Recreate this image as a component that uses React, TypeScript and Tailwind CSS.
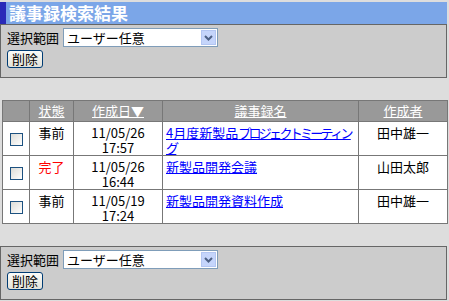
import React from 'react';

const rows = [
  { status: '事前', done: false, date: '11/05/26', time: '17:57', title: ['4月度新製品', 'プロジェクトミーティング'], author: '田中雄一' },
  { status: '完了', done: true, date: '11/05/26', time: '16:44', title: ['新製品開発会議', ''], author: '山田太郎' },
  { status: '事前', done: false, date: '11/05/19', time: '17:24', title: ['新製品開発資料作成', ''], author: '田中雄一' },
];

const FilterPanel: React.FC = () => (
  <div className="h-[54px] bg-[#cccccc] border border-[#666666] pt-[3px] pl-[6px]">
    <div className="flex items-center h-[19px]">
      <span className="w-[56px] leading-[19px] text-black">選択範囲</span>
      <div className="w-[155px] h-[19px] bg-white border border-[#7f9db9] flex items-center justify-between pl-[3px] pr-[1px]">
        <span className="leading-[17px] text-black">ユーザー任意</span>
        <span className="w-[15px] h-[15px] bg-[#c5d5fb] border border-[#b3c6f2] flex items-center justify-center">
          <svg width="9" height="6" viewBox="0 0 9 6">
            <path d="M1 1 L4.5 4.5 L8 1" stroke="#4d6185" strokeWidth="2" fill="none" />
          </svg>
        </span>
      </div>
    </div>
    <button className="mt-[3px] w-[36px] h-[18px] rounded-[3px] border border-[#003c74] bg-linear-to-b from-[#fbfbf8] to-[#e3e2da] text-black leading-[16px] p-0">
      削除
    </button>
  </div>
);

const App: React.FC = () => {
  return (
    <div className="w-[449px] h-[301px] bg-[#dddddd] pt-[2px] font-['Noto_Sans_CJK_JP',sans-serif] text-[13px] overflow-hidden">
      <div className="w-[447px]">
        <div className="h-[22px] bg-[#7ba6e8] border-l-[6px] border-[#2a2ab8] pl-[3px] text-white font-bold text-[17px] leading-[22px]">
          議事録検索結果
        </div>
        <FilterPanel />

        <table className="mt-[22px] ml-[2px] w-[445px] table-fixed border-collapse border border-[#777777] bg-white">
          <colgroup>
            <col className="w-[27px]" />
            <col className="w-[44px]" />
            <col className="w-[89px]" />
            <col className="w-[196px]" />
            <col className="w-[89px]" />
          </colgroup>
          <thead>
            <tr className="bg-[#999999] text-white">
              <th className="border border-[#777777] py-[3px] leading-[14px] font-normal"></th>
              <th className="border border-[#777777] py-[3px] leading-[14px] font-normal underline">状態</th>
              <th className="border border-[#777777] py-[3px] leading-[14px] font-normal underline">作成日▼</th>
              <th className="border border-[#777777] py-[3px] leading-[14px] font-normal underline">議事録名</th>
              <th className="border border-[#777777] py-[3px] leading-[14px] font-normal underline">作成者</th>
            </tr>
          </thead>
          <tbody>
            {rows.map((row, i) => (
              <tr key={i} className="text-black">
                <td className="border border-[#777777] align-middle text-center p-0">
                  <input
                    type="checkbox"
                    className="appearance-none block mx-auto mt-[2px] w-[13px] h-[13px] border border-[#1c5180] bg-linear-to-br from-[#dcdcd7] to-white"
                  />
                </td>
                <td className={`border border-[#777777] align-top text-center pt-[3px] pb-0 leading-[15px] ${row.done ? 'text-[#ff0000]' : ''}`}>
                  {row.status}
                </td>
                <td className="border border-[#777777] align-top text-center pt-[3px] pb-0 leading-[15px]">
                  {row.date}
                  <br />
                  {row.time}
                </td>
                <td className="border border-[#777777] align-top text-left pt-[3px] pb-0 px-[3px] leading-[15px]">
                  <a href="#" className="text-[#0000ff] underline">
                    {row.title[0]}
                    {row.title[1] && <span className="tracking-[-2.7px]">{row.title[1]}</span>}
                  </a>
                </td>
                <td className="border border-[#777777] align-top text-center pt-[3px] pb-0 leading-[15px]">
                  {row.author}
                </td>
              </tr>
            ))}
          </tbody>
        </table>

        <div className="mt-[22px]">
          <FilterPanel />
        </div>
      </div>
    </div>
  );
};

export default App;
